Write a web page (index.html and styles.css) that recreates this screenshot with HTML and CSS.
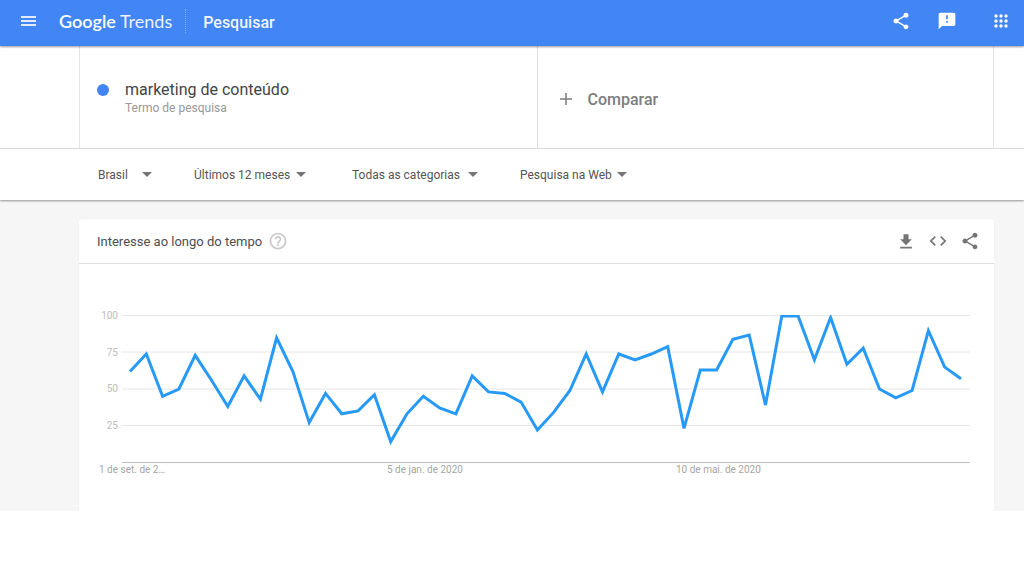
FILE: index.html
```
<!DOCTYPE html>
<html lang="pt-BR">
<head>
  <meta charset="UTF-8" />
  <meta name="viewport" content="width=device-width, initial-scale=1.0">
  <title>Google Trends - marketing de conteúdo</title>
  <link rel="stylesheet" href="styles.css">
</head>
<body>
  <!-- Header -->
  <header class="header">
    <button class="icon-btn menu-btn" aria-label="Menu">
      <svg width="16" height="12" viewBox="0 0 16 12"><path d="M1 2h15M1 6h15M1 10h15" stroke="currentColor" stroke-width="2"/></svg>
    </button>
    <a class="logo" href="#"><span class="logo-google">Google</span> <span class="logo-trends">Trends</span></a>
    <a class="header-link" href="#">Pesquisar</a>
    <div class="header-actions">
      <button class="icon-btn" aria-label="Compartilhar">
        <svg width="20" height="20" viewBox="0 0 24 24" fill="currentColor"><path d="M18 16.08c-.76 0-1.44.3-1.96.77L8.91 12.7c.05-.23.09-.46.09-.7s-.04-.47-.09-.7l7.05-4.11c.54.5 1.25.81 2.04.81 1.66 0 3-1.34 3-3s-1.34-3-3-3-3 1.34-3 3c0 .24.04.47.09.7L8.04 9.81C7.5 9.31 6.79 9 6 9c-1.66 0-3 1.34-3 3s1.34 3 3 3c.79 0 1.5-.31 2.04-.81l7.12 4.16c-.05.21-.08.43-.08.65 0 1.61 1.31 2.92 2.92 2.92s2.92-1.31 2.92-2.92-1.31-2.92-2.92-2.92z"/></svg>
      </button>
      <button class="icon-btn" aria-label="Enviar feedback">
        <svg width="20" height="20" viewBox="0 0 24 24" fill="currentColor"><path d="M20 2H4c-1.1 0-1.99.9-1.99 2L2 22l4-4h14c1.1 0 2-.9 2-2V4c0-1.1-.9-2-2-2zm-7 12h-2v-2h2v2zm0-4h-2V5h2v5z"/></svg>
      </button>
      <button class="icon-btn apps-btn" aria-label="Google Apps">
        <svg width="20" height="20" viewBox="0 0 20 20" fill="currentColor">
          <circle cx="5" cy="5" r="1.7"/><circle cx="10" cy="5" r="1.7"/><circle cx="15" cy="5" r="1.7"/>
          <circle cx="5" cy="10" r="1.7"/><circle cx="10" cy="10" r="1.7"/><circle cx="15" cy="10" r="1.7"/>
          <circle cx="5" cy="15" r="1.7"/><circle cx="10" cy="15" r="1.7"/><circle cx="15" cy="15" r="1.7"/>
        </svg>
      </button>
    </div>
  </header>

  <!-- Search terms -->
  <section class="terms">
    <div class="term">
      <span class="term-dot"></span>
      <div class="term-text">
        <input class="term-input" id="term" type="text" value="marketing de conteúdo">
        <label class="term-label" for="term">Termo de pesquisa</label>
      </div>
    </div>
    <button class="compare">
      <svg width="12" height="12" viewBox="0 0 12 12"><path d="M6 0v12M0 6h12" stroke="currentColor" stroke-width="1.5"/></svg>
      Comparar
    </button>
  </section>

  <!-- Filters -->
  <nav class="filters">
    <div class="filter">
      <select class="select-geo" aria-label="Região"><option>Brasil</option></select>
    </div>
    <div class="filter">
      <select class="select-time" aria-label="Período"><option>Últimos 12 meses</option></select>
    </div>
    <div class="filter">
      <select class="select-category" aria-label="Categoria"><option>Todas as categorias</option></select>
    </div>
    <div class="filter">
      <select class="select-property" aria-label="Tipo de pesquisa"><option>Pesquisa na Web</option></select>
    </div>
  </nav>

  <main class="content">
    <section class="card">
      <div class="card-header">
        <h1 class="card-title">Interesse ao longo do tempo</h1>
        <button class="icon-btn help-btn" aria-label="Ajuda">
          <svg width="20" height="20" viewBox="0 0 24 24" fill="currentColor"><path d="M11 18h2v-2h-2v2zm1-16C6.48 2 2 6.48 2 12s4.48 10 10 10 10-4.48 10-10S17.52 2 12 2zm0 18c-4.41 0-8-3.59-8-8s3.59-8 8-8 8 3.59 8 8-3.59 8-8 8zm0-14c-2.21 0-4 1.79-4 4h2c0-1.1.9-2 2-2s2 .9 2 2c0 2-3 1.75-3 5h2c0-2.25 3-2.5 3-5 0-2.21-1.79-4-4-4z"/></svg>
        </button>
        <div class="card-actions">
          <button class="icon-btn" aria-label="Baixar CSV">
            <svg width="20" height="20" viewBox="0 0 24 24" fill="currentColor"><path d="M19 10h-4V4H9v6H5l7 7 7-7zM5 19v2h14v-2H5z"/></svg>
          </button>
          <button class="icon-btn" aria-label="Incorporar">
            <svg width="20" height="20" viewBox="0 0 24 24" fill="currentColor"><path d="M9.4 16.6L4.8 12l4.6-4.6L8 6l-6 6 6 6 1.4-1.4zm5.2 0l4.6-4.6-4.6-4.6L16 6l6 6-6 6-1.4-1.4z"/></svg>
          </button>
          <button class="icon-btn" aria-label="Compartilhar gráfico">
            <svg width="20" height="20" viewBox="0 0 24 24" fill="currentColor"><path d="M18 16.08c-.76 0-1.44.3-1.96.77L8.91 12.7c.05-.23.09-.46.09-.7s-.04-.47-.09-.7l7.05-4.11c.54.5 1.25.81 2.04.81 1.66 0 3-1.34 3-3s-1.34-3-3-3-3 1.34-3 3c0 .24.04.47.09.7L8.04 9.81C7.5 9.31 6.79 9 6 9c-1.66 0-3 1.34-3 3s1.34 3 3 3c.79 0 1.5-.31 2.04-.81l7.12 4.16c-.05.21-.08.43-.08.65 0 1.61 1.31 2.92 2.92 2.92s2.92-1.31 2.92-2.92-1.31-2.92-2.92-2.92z"/></svg>
          </button>
        </div>
      </div>

      <svg class="chart" viewBox="0 0 915 247" role="img" aria-label="Interesse ao longo do tempo">
        <defs>
          <clipPath id="plot"><rect x="43" y="51" width="848" height="148"/></clipPath>
        </defs>
        <path class="grid-line" d="M43 51.5H891M43 88H891M43 125H891M43 161.5H891"/>
        <path class="base-line" d="M43 198.5H891"/>
        <g class="y-labels">
          <text x="39" y="55">100</text>
          <text x="39" y="92">75</text>
          <text x="39" y="128">50</text>
          <text x="39" y="165">25</text>
        </g>
        <g class="x-labels">
          <text x="20" y="209">1 de set. de 2…</text>
          <text x="308" y="209">5 de jan. de 2020</text>
          <text x="597" y="209">10 de mai. de 2020</text>
        </g>
        <g clip-path="url(#plot)">
          <polyline class="line" id="line"/>
        </g>
      </svg>
    </section>
  </main>

  <script>
    const values = [
      62, 74, 45, 50, 73, 56, 38, 59, 43, 85, 62, 27, 47,
      33, 35, 46, 14, 33, 45, 37, 33, 59, 48, 47, 41, 22,
      34, 49, 74, 48, 74, 70, 74, 79, 23, 63, 63, 84, 87,
      39, 100, 100, 70, 99, 67, 78, 50, 44, 49, 90, 65, 57
    ];
    const left = 51;
    const right = 882;
    const top0 = 52;
    const bottom = 198;
    const step = (right - left) / (values.length - 1);

    const points = values.map((v, i) => {
      const x = left + i * step;
      const y = bottom - (bottom - top0) * v / 100;
      return x.toFixed(1) + ',' + y.toFixed(1);
    });
    document.getElementById('line').setAttribute('points', points.join(' '));
  </script>
</body>
</html>
```
FILE: styles.css
```
* {
  box-sizing: border-box;
}
body {
  margin: 0;
  background-color: #fff;
  color: #444;
  font-family: Roboto, Arial, sans-serif;
}
button, input, select {
  font-family: inherit;
  color: inherit;
  background: none;
  border: 0;
  padding: 0;
  margin: 0;
}
.icon-btn {
  display: flex;
  align-items: center;
  justify-content: center;
  cursor: pointer;
}
/* Header */
.header {
  position: relative;
  display: flex;
  align-items: center;
  height: 46px;
  padding: 0 13px 4px 20px;
  background-color: #4285f4;
  color: #fff;
  box-shadow: 0 1px 2px rgba(0, 0, 0, 0.4);
}
.menu-btn {
  width: 16px;
  margin-right: 23px;
  opacity: 0.85;
}
.logo {
  padding-right: 13px;
  border-right: 1px dotted #8ab4f8;
  color: #fff;
  font-family: Lato, sans-serif;
  font-size: 18px;
  line-height: 24px;
  text-decoration: none;
  white-space: nowrap;
}
.logo-google {
  font-weight: 600;
}
.logo-trends {
  opacity: 0.9;
}
.header-link {
  margin-left: 17px;
  padding-top: 2px;
  color: #f1f6fe;
  font-size: 16px;
  font-weight: 500;
  text-decoration: none;
}
.header-actions {
  display: flex;
  gap: 26px;
  margin-left: auto;
}
.apps-btn {
  margin-left: 8px;
}
/* Search terms */
.terms {
  display: grid;
  grid-template-columns: 1fr 1fr;
  height: 103px;
  padding: 0 30px 0 79px;
  border-bottom: 1px solid #e0e0e0;
}
.term {
  display: flex;
  gap: 16px;
  padding: 34px 0 0 17px;
  border-left: 1px solid #e4e4e8;
}
.term-dot {
  width: 12px;
  height: 12px;
  margin-top: 4px;
  border-radius: 50%;
  background-color: #4285f4;
}
.term-text {
  display: flex;
  flex: 1;
  flex-direction: column;
}
.term-input {
  width: 100%;
  height: 19px;
  font-size: 16px;
}
.term-label {
  color: #999;
  font-size: 12px;
  line-height: 18px;
}
.compare {
  display: flex;
  align-items: center;
  gap: 16px;
  padding: 4px 0 0 22px;
  border-left: 1px solid #e0e0e0;
  border-right: 1px solid #e4e4e8;
  color: #7d7d7d;
  font-size: 16px;
  font-weight: 500;
  cursor: pointer;
}
/* Filters */
.filters {
  position: relative;
  display: grid;
  grid-template-columns: 96px 158px 168px auto;
  justify-content: start;
  align-items: center;
  height: 51px;
  padding-left: 98px;
  background-color: #fff;
  box-shadow: 0 1px 2px rgba(0, 0, 0, 0.4);
}
.filter {
  display: flex;
  align-items: center;
}
.filter::after {
  content: "";
  border: 5px solid transparent;
  border-top-color: #757575;
  border-bottom: 0;
}
.filter select {
  appearance: none;
  color: #555;
  font-size: 12px;
  cursor: pointer;
}
.select-geo {
  width: 44px;
}
.select-time {
  width: 102px;
}
.select-category {
  width: 116px;
}
.select-property {
  width: 97px;
}
/* Chart card */
.content {
  padding: 19px 30px 0 79px;
  background-color: #f6f6f6;
}
.card {
  border-radius: 2px 2px 0 0;
  background-color: #fff;
  box-shadow: 0 0 1px rgba(0, 0, 0, 0.15);
  clip-path: inset(-2px -2px 0 -2px);
}
.card-header {
  display: flex;
  align-items: center;
  height: 45px;
  padding: 0 14px 0 18px;
  border-bottom: 1px solid #e0e0e0;
}
.card-title {
  margin: 0;
  color: #4a4e54;
  font-size: 13px;
  font-weight: 400;
}
.help-btn {
  margin-left: 6px;
  color: #c8c8c8;
}
.card-actions {
  display: flex;
  gap: 12px;
  margin-left: auto;
  color: #757575;
}
.chart {
  display: block;
  width: 100%;
}
.grid-line {
  stroke: #e6e6e6;
  stroke-width: 1;
}
.base-line {
  stroke: #bbb;
  stroke-width: 1;
}
.y-labels {
  fill: #bdbdbd;
  font-size: 10px;
  text-anchor: end;
}
.x-labels {
  fill: #a5a5a5;
  font-size: 10px;
}
.line {
  fill: none;
  stroke: #2799f6;
  stroke-width: 3;
}
```
